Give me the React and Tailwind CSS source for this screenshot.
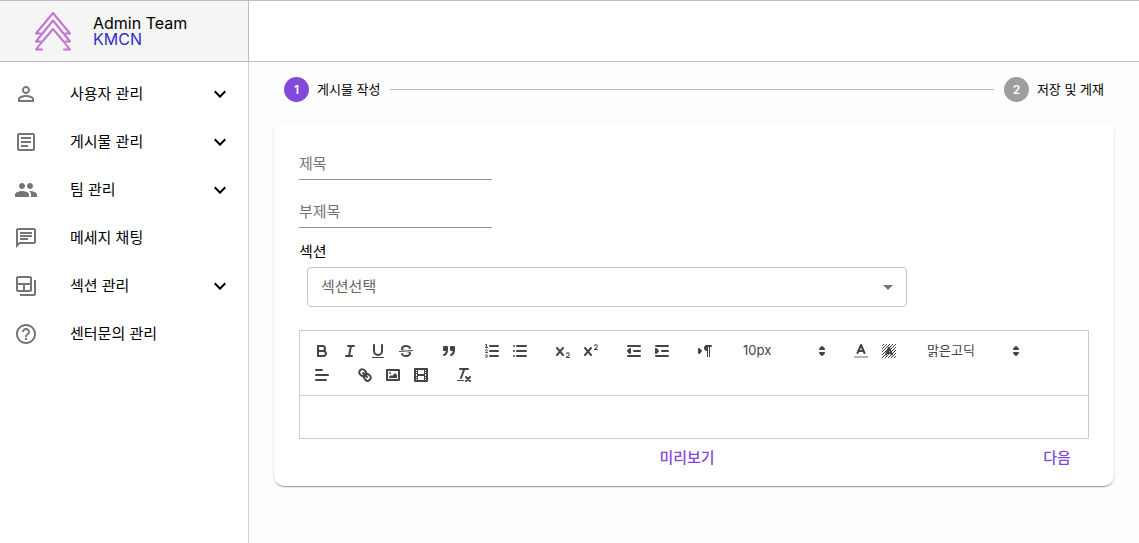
import {
  MdPersonOutline,
  MdOutlineArticle,
  MdPeople,
  MdOutlineChat,
  MdOutlineBackupTable,
  MdHelpOutline,
  MdExpandMore,
  MdArrowDropDown,
} from 'react-icons/md';

const menu = [
  { label: '사용자 관리', Icon: MdPersonOutline, expandable: true },
  { label: '게시물 관리', Icon: MdOutlineArticle, expandable: true },
  { label: '팀 관리', Icon: MdPeople, expandable: true },
  { label: '메세지 채팅', Icon: MdOutlineChat },
  { label: '섹션 관리', Icon: MdOutlineBackupTable, expandable: true },
  { label: '센터문의 관리', Icon: MdHelpOutline },
];

function Logo() {
  return (
    <svg viewBox="0 0 40 42" className="h-[42px] w-10" fill="none" stroke="#c173d3" strokeWidth="2" strokeLinejoin="round" strokeLinecap="round" aria-hidden="true">
      <path d="M7.5 23.500H3L20 3L37 23.500H32.500" />
      <path d="M7.500 31.500H3L20 10.500L37 31.500H32.500" />
      <path d="M9 39.500H3L9 32L20 19L31 32L37 39.500H31" />
    </svg>
  );
}

/* Toolbar glyphs: an 18-unit grid, two-unit round strokes */
function Glyph({ children }) {
  return (
    <svg viewBox="0 0 18 18" className="size-[18px]" fill="none" stroke="#444" strokeWidth="2" strokeLinecap="round" strokeLinejoin="round" aria-hidden="true">
      {children}
    </svg>
  );
}

const solid = { fill: '#444', stroke: 'none' };
const both = { fill: '#444' };

const crossPath =
  'M9.65,5.241a1,1,0,0,0-1.409.108L6,7.964,3.759,5.349A1,1,0,0,0,2.192,6.59178Q2.21541,6.6213,2.241,6.649L4.684,9.5,2.241,12.35A1,1,0,0,0,3.71,13.70722q0.02557-.02768.049-0.05722L6,11.036,8.241,13.65a1,1,0,1,0,1.567-1.24277Q9.78459,12.3777,9.759,12.35L7.316,9.5,9.759,6.651A1,1,0,0,0,9.65,5.241Z';
const twoPath =
  'M15.5,15H13.861a3.858,3.858,0,0,0,1.914-2.975,1.8,1.8,0,0,0-1.6-1.751A1.921,1.921,0,0,0,12.021,11.7a0.50013,0.50013,0,1,0,.957.291h0a0.914,0.914,0,0,1,1.053-.725,0.81,0.81,0,0,1,.744.762c0,1.076-1.16971,1.86982-1.93971,2.43082A1.45639,1.45639,0,0,0,12,15.5a0.5,0.5,0,0,0,.5.5h3A0.5,0.5,0,0,0,15.5,15Z';

const glyphs = {
  bold: (
    <>
      <path d="M5,4H9.5A2.5,2.5,0,0,1,12,6.5v0A2.5,2.5,0,0,1,9.5,9H5V4Z" />
      <path d="M5,9h5.5A2.5,2.5,0,0,1,13,11.5v0A2.5,2.5,0,0,1,10.5,14H5V9Z" />
    </>
  ),
  italic: <path d="M7 4H13M5 14H11M8 14L10 4" />,
  underline: (
    <>
      <path d="M5,3V9a4.012,4.012,0,0,0,4,4H9a4.012,4.012,0,0,0,4-4V3" />
      <rect {...solid} x="3" y="15" width="12" height="1" rx="0.5" />
    </>
  ),
  strike: (
    <>
      <path strokeWidth="1" d="M15.5 8.5L2.5 9.5" />
      <path {...solid} d="M9.007,8C6.542,7.791,6,7.519,6,6.5,6,5.792,7.283,5,9,5c1.571,0,2.765.679,2.969,1.309a1,1,0,0,0,1.9-.617C13.356,4.106,11.354,3,9,3,6.2,3,4,4.538,4,6.5a3.2,3.2,0,0,0,.5,1.843Z" />
      <path {...solid} d="M8.984,10C11.457,10.208,12,10.479,12,11.5c0,.708-1.283,1.5-3,1.5-1.571,0-2.765-.679-2.969-1.309a1,1,0,1,0-1.9.617C4.644,13.894,6.646,15,9,15c2.8,0,5-1.538,5-3.5a3.2,3.2,0,0,0-.5-1.843Z" />
    </>
  ),
  quote: (
    <g {...both}>
      <rect x="4" y="5" width="3" height="3" />
      <rect x="11" y="5" width="3" height="3" />
      <path d="M7,8c0,4.031-3,5-3,5" />
      <path d="M14,8c0,4.031-3,5-3,5" />
    </g>
  ),
  ordered: (
    <>
      <path d="M7 4H15M7 9H15M7 14H15" />
      <path strokeWidth="1" d="M2.5 5.5H4.5M4.5,10.5h-2c0-.234,1.85-1.076,1.85-2.234A0.959,0.959,0,0,0,2.5,8.156M2.5,14.846a0.959,0.959,0,0,0,1.85-.109A0.7,0.7,0,0,0,3.75,14a0.688,0.688,0,0,0,.6-0.736,0.959,0.959,0,0,0-1.85-.109" />
      <path {...solid} d="M3.5,6A0.5,0.5,0,0,1,3,5.5V3.085l-0.276.138A0.5,0.5,0,0,1,2.053,3c-0.124-.247-0.023-0.324.224-0.447l1-.5A0.5,0.5,0,0,1,4,2.5v3A0.5,0.5,0,0,1,3.5,6Z" />
    </>
  ),
  bullet: <path d="M6 4H15M6 9H15M6 14H15M3 4H3M3 9H3M3 14H3" />,
  sub: (
    <g {...solid}>
      <path d={twoPath} />
      <path d={crossPath} />
    </g>
  ),
  super: (
    <g {...solid}>
      <path d={twoPath} transform="translate(0 -8)" />
      <path d={crossPath} />
    </g>
  ),
  outdent: (
    <>
      <path d="M3 14H15M3 4H15M9 9H15" />
      <path {...both} d="M5 7V11L3 9Z" />
    </>
  ),
  indent: (
    <>
      <path d="M3 14H15M3 4H15M9 9H15" />
      <path {...both} d="M3 7V11L5 9Z" />
    </>
  ),
  direction: (
    <>
      <path {...both} d="M3 11L5 9L3 7Z" />
      <path d="M15 4H11" />
      <path {...solid} d="M11,3a3,3,0,0,0,0,6h1V3H11Z" />
      <rect {...solid} x="11" y="4" width="1" height="11" />
      <rect {...solid} x="13" y="4" width="1" height="11" />
    </>
  ),
  color: (
    <>
      <path opacity="0.4" strokeLinecap="butt" d="M2 15H16" />
      <path d="M5.500 11L9 3L12.500 11M11.630 9H6.380" />
    </>
  ),
  background: (
    <>
      <defs>
        <pattern id="hatch" width="3" height="3" patternUnits="userSpaceOnUse">
          <path d="M2 0h1v1h-1ZM1 1h1v1h-1ZM0 2h1v1h-1Z" fill="#444" stroke="none" />
        </pattern>
      </defs>
      <rect x="2" y="2" width="14" height="14" fill="url(#hatch)" stroke="none" />
      <path d="M6 12.500L9 5.500L12 12.500M11.500 11H6.500" />
    </>
  ),
  align: <path d="M3 4H9M3 9H15M3 14H13" />,
  link: (
    <>
      <path d="M7 7L11 11" />
      <path d="M8.9,4.577a3.476,3.476,0,0,1,.36,4.679A3.476,3.476,0,0,1,4.577,8.9C3.185,7.5,2.035,6.4,4.217,4.217S7.5,3.185,8.9,4.577Z" />
      <path d="M13.423,9.1a3.476,3.476,0,0,0-4.679-.36,3.476,3.476,0,0,0,.36,4.679c1.392,1.392,2.5,2.542,4.679.36S14.815,10.5,13.423,9.1Z" />
    </>
  ),
  image: (
    <>
      <rect x="3" y="4" width="12" height="10" />
      <circle {...solid} cx="6" cy="7" r="1" />
      <path {...solid} d="M5 12V11L7 9L8 10L11 7L13 9V12Z" />
    </>
  ),
  video: (
    <>
      <rect x="3" y="3" width="12" height="12" />
      <path {...solid} d="M5 3h1v12H5ZM12 3h1v12H12ZM5 8h8v2H5ZM3 5h3v1H3ZM3 7h3v1H3ZM3 10h3v1H3ZM3 12h3v1H3ZM12 5h3v1H12ZM12 7h3v1H12ZM12 10h3v1H12ZM12 12h3v1H12Z" />
    </>
  ),
  clean: (
    <>
      <path d="M5 3H13M6 12L9.350 3M11 11L15 15M15 11L11 15" />
      <rect {...solid} x="2" y="14" width="7" height="1" rx="0.5" />
    </>
  ),
};

function Tools({ items }) {
  return (
    <div className="mr-[15px] flex">
      {items.map(([name, title]) => (
        <button key={name} type="button" aria-label={title} className="flex h-6 w-7 items-center justify-center">
          <Glyph>{glyphs[name]}</Glyph>
        </button>
      ))}
    </div>
  );
}

function Picker({ label, value, className }) {
  return (
    <div className={`relative mr-[15px] h-6 ${className}`}>
      <select aria-label={label} defaultValue={value} className="h-6 w-full appearance-none bg-transparent pl-[9px] text-[13px] text-[#444]">
        <option>{value}</option>
      </select>
      <span className="pointer-events-none absolute top-[3px] right-px">
        <Glyph>
          <path {...both} d="M7 11L9 13L11 11ZM7 7L9 5L11 7Z" />
        </Glyph>
      </span>
    </div>
  );
}

function Step({ number, label, active }) {
  return (
    <li className="flex items-center gap-2">
      <span className={`flex size-[25px] items-center justify-center rounded-full text-xs font-semibold text-white ${active ? 'bg-[#8349db]' : 'bg-[#9e9e9e]'}`}>
        {number}
      </span>
      <span className="text-[13px]">{label}</span>
    </li>
  );
}

export default function App() {
  return (
    <div className="flex min-h-screen flex-col bg-[#fdfdfd] font-['Inter','Noto_Sans_CJK_KR',sans-serif] text-[15px] text-black">
      <header className="flex h-[62px] border-y border-[#bdbdbd] bg-white">
        <div className="flex w-[249px] items-center gap-5 border-r border-[#bdbdbd] bg-[#f5f5f5] pl-[33px]">
          <Logo />
          <div className="text-base leading-4">
            <p>Admin Team</p>
            <p className="text-[#3030c8]">KMCN</p>
          </div>
        </div>
      </header>
      <div className="flex flex-1">
        <nav className="w-[249px] shrink-0 border-r border-[#d3d0e3] bg-white pt-2">
          <ul>
            {menu.map(({ label, Icon, expandable }) => (
              <li key={label}>
                <button type="button" className="flex h-12 w-full items-center pr-4 pl-[14px] text-left">
                  <Icon className="size-6 text-[#757575]" />
                  <span className="ml-8 flex-1 leading-6">{label}</span>
                  {expandable && <MdExpandMore className="size-6" />}
                </button>
              </li>
            ))}
          </ul>
        </nav>
        <main className="min-w-0 flex-1 px-[25px] pt-[15px]">
          <ol className="flex items-center gap-[10px] px-[10px]">
            <Step number={1} label="게시물 작성" active />
            <li aria-hidden="true" className="h-px flex-1 bg-[#bdbdbd]" />
            <Step number={2} label="저장 및 게재" />
          </ol>
          <form className="mt-5 flex flex-col rounded-[10px] bg-white px-[25px] pt-[25px] pb-[9px] shadow-[0_2px_1px_-1px_rgba(0,0,0,0.2),0_1px_1px_rgba(0,0,0,0.14),0_1px_3px_rgba(0,0,0,0.12)]">
            <input aria-label="제목" placeholder="제목" className="h-[33px] w-[193px] border-b border-[#949494] placeholder:text-[#757575]" />
            <input aria-label="부제목" placeholder="부제목" className="mt-[15px] h-[33px] w-[193px] border-b border-[#949494] placeholder:text-[#757575]" />
            <label htmlFor="section" className="mt-3 leading-6">
              섹션
            </label>
            <div className="relative mx-2 mt-[3px] max-w-[600px]">
              <select id="section" defaultValue="섹션선택" className="h-10 w-full appearance-none rounded border border-[#c4c4c4] bg-white px-[13px] text-[#666]">
                <option>섹션선택</option>
              </select>
              <MdArrowDropDown className="pointer-events-none absolute top-2 right-[7px] size-6 text-[#757575]" />
            </div>
            <div className="mt-[23px] border border-[#ccc]">
              <div role="toolbar" aria-label="서식" className="flex flex-wrap border-b border-[#ccc] p-2">
                <Tools items={[['bold', '굵게'], ['italic', '기울임'], ['underline', '밑줄'], ['strike', '취소선']]} />
                <Tools items={[['quote', '인용']]} />
                <Tools items={[['ordered', '번호 목록'], ['bullet', '목록']]} />
                <Tools items={[['sub', '아래 첨자'], ['super', '위 첨자']]} />
                <Tools items={[['outdent', '내어쓰기'], ['indent', '들여쓰기']]} />
                <Tools items={[['direction', '글 방향']]} />
                <Picker label="글자 크기" value="10px" className="w-[98px]" />
                <Tools items={[['color', '글자 색'], ['background', '배경 색']]} />
                <Picker label="글꼴" value="맑은고딕" className="w-[108px]" />
                <Tools items={[['align', '정렬']]} />
                <Tools items={[['link', '링크'], ['image', '이미지'], ['video', '동영상']]} />
                <Tools items={[['clean', '서식 지우기']]} />
              </div>
              <textarea aria-label="내용" rows={1} className="block h-[42px] w-full resize-none px-4 py-3 outline-none" />
            </div>
            <div className="grid grid-cols-[50px_1fr_64px] font-medium text-[#8349db]">
              <button type="button" className="col-start-2 h-[38px] justify-self-center px-2">미리보기</button>
              <button type="button" className="h-[38px]">다음</button>
            </div>
          </form>
        </main>
      </div>
    </div>
  );
}
